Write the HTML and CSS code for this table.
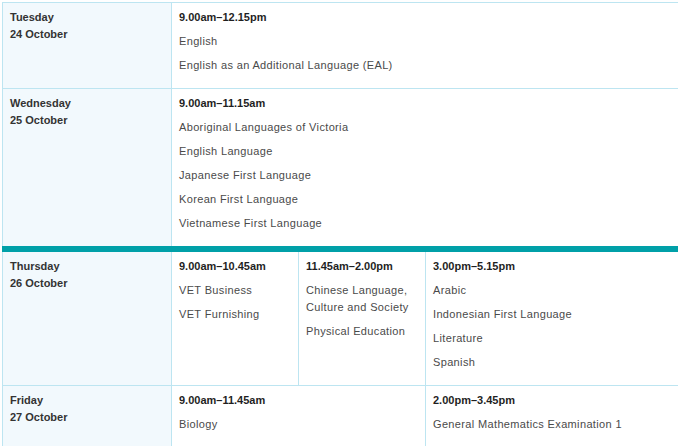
FILE: index.html
```html
<!DOCTYPE html>
<html lang="en">
<head>
<meta charset="utf-8">
<title>Exam timetable</title>
<link rel="stylesheet" href="styles.css">
</head>
<body>
<table class="timetable">
  <colgroup>
    <col class="col-day">
    <col class="col-a">
    <col class="col-b">
    <col class="col-c">
  </colgroup>
  <tbody>
    <tr>
      <th class="day"><span>Tuesday</span><span>24 October</span></th>
      <td colspan="3" class="slot last">
        <p class="time">9.00am–12.15pm</p>
        <p>English</p>
        <p>English as an Additional Language (EAL)</p>
      </td>
    </tr>
    <tr>
      <th class="day"><span>Wednesday</span><span>25 October</span></th>
      <td colspan="3" class="slot last">
        <p class="time">9.00am–11.15am</p>
        <p>Aboriginal Languages of Victoria</p>
        <p>English Language</p>
        <p>Japanese First Language</p>
        <p>Korean First Language</p>
        <p>Vietnamese First Language</p>
      </td>
    </tr>
    <tr class="week-break">
      <th class="day"><span>Thursday</span><span>26 October</span></th>
      <td class="slot">
        <p class="time">9.00am–10.45am</p>
        <p>VET Business</p>
        <p>VET Furnishing</p>
      </td>
      <td class="slot">
        <p class="time">11.45am–2.00pm</p>
        <p>Chinese Language, Culture and Society</p>
        <p>Physical Education</p>
      </td>
      <td class="slot last">
        <p class="time">3.00pm–5.15pm</p>
        <p>Arabic</p>
        <p>Indonesian First Language</p>
        <p>Literature</p>
        <p>Spanish</p>
      </td>
    </tr>
    <tr>
      <th class="day"><span>Friday</span><span>27 October</span></th>
      <td colspan="2" class="slot">
        <p class="time">9.00am–11.45am</p>
        <p>Biology</p>
      </td>
      <td class="slot last">
        <p class="time">2.00pm–3.45pm</p>
        <p>General Mathematics Examination 1</p>
      </td>
    </tr>
  </tbody>
</table>
</body>
</html>
```

FILE: styles.css
```css
html, body {
  background: #ffffff;
}
body {
  margin: 2px 0 0 2px;
  font-family: "Liberation Sans", Arial, sans-serif;
  font-size: 11px;
  color: #444444;
}
.timetable {
  border-collapse: collapse;
  table-layout: fixed;
  width: 675px;
}
.col-day { width: 169px; }
.col-a { width: 127px; }
.col-b { width: 127px; }
.col-c { width: 252px; }

.timetable th,
.timetable td {
  border: 1px solid #bde5f1;
  vertical-align: top;
  text-align: left;
  padding: 6px 8px 14px 7px;
}
.timetable td.last {
  border-right: none;
}
.day {
  background: #f2f9fd;
  font-weight: bold;
  color: #333333;
  line-height: 17px;
}
.day span {
  display: block;
}
.slot {
  padding-left: 7px;
}
.slot p {
  margin: 0 0 7px 0;
  line-height: 17px;
  color: #4a4a4a;
  letter-spacing: 0.35px;
}
.slot p:last-child {
  margin-bottom: 0;
}
.slot p.time {
  font-weight: bold;
  color: #1f1f1f;
  letter-spacing: 0;
}
.week-break th,
.week-break td {
  border-top: 6px solid #00a0a8;
}
```
